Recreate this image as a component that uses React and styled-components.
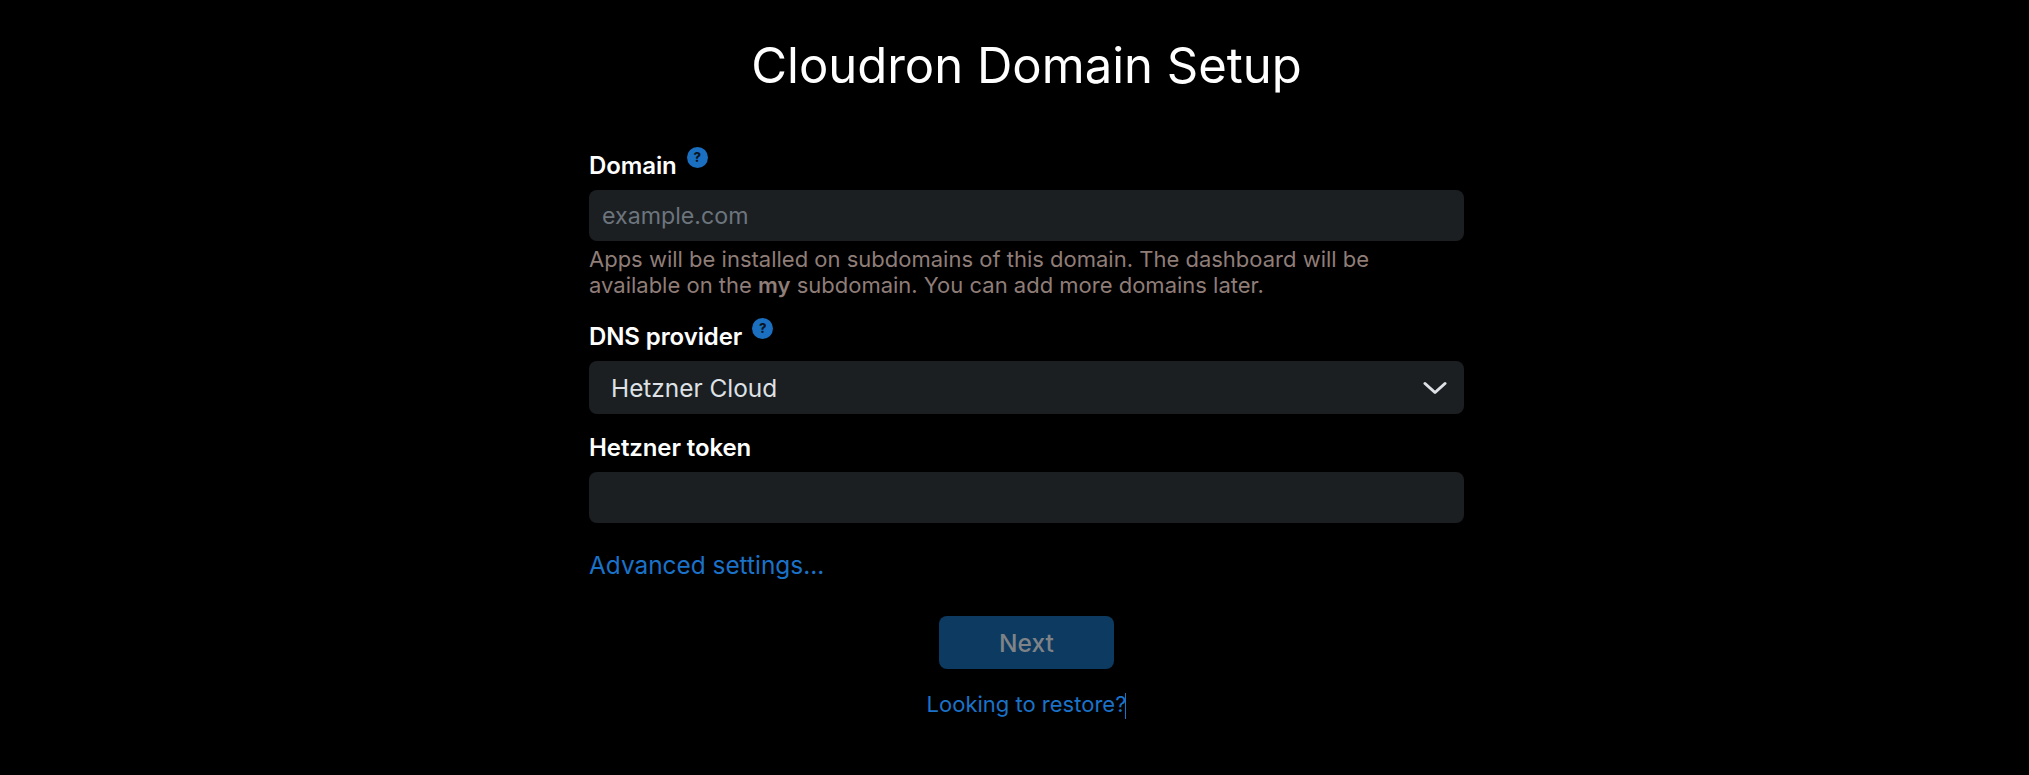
import React from 'react';
import styled, { createGlobalStyle } from 'styled-components';

const Global = createGlobalStyle`
  html, body {
    margin: 0;
    padding: 0;
    background: #000;
  }
  body {
    font-family: Inter, "Liberation Sans", sans-serif;
    color: #fff;
  }
`;

const Page = styled.div`
  min-height: 775px;
  box-sizing: border-box;
  padding: 33px 0 0 24px;
  display: flex;
  flex-direction: column;
  align-items: center;
`;

const Title = styled.h1`
  margin: 0 0 49px;
  font-size: 49px;
  line-height: 66px;
  font-weight: 400;
`;

const Form = styled.form`
  width: 875px;
  display: flex;
  flex-direction: column;
`;

const Label = styled.label`
  display: flex;
  align-items: flex-start;
  height: 42px;
  font-size: 24px;
  line-height: 36px;
  font-weight: 600;
  letter-spacing: -0.1px;
`;

const HelpBadge = styled.span`
  width: 21px;
  height: 21px;
  margin: -1px 0 0 10px;
  border-radius: 50%;
  background: #1a6fc0;
  color: #0b1420;
  font-size: 13px;
  line-height: 21px;
  font-weight: 800;
  text-align: center;
  letter-spacing: 0;
`;

const Input = styled.input`
  box-sizing: border-box;
  width: 100%;
  height: 51px;
  padding: 0 13px;
  border: 0;
  border-radius: 8px;
  background: #1c1f22;
  color: #e8e8e8;
  font: 400 23.2px Inter, sans-serif;

  &::placeholder {
    color: #6c757d;
    opacity: 1;
  }
`;

const Hint = styled.p`
  margin: 5px 0 21px;
  color: #8f7d78;
  font-size: 22px;
  line-height: 26px;
  font-weight: 400;

  b {
    font-weight: 600;
  }
`;

const SelectBox = styled.div`
  box-sizing: border-box;
  width: 100%;
  height: 53px;
  margin-bottom: 16px;
  padding: 0 17px 0 22px;
  display: flex;
  align-items: center;
  justify-content: space-between;
  border-radius: 8px;
  background: #1c1f22;
  color: #dee2e6;
  font-size: 24.4px;
`;

const Chevron = styled.svg`
  width: 24px;
  height: 14px;
  fill: none;
  stroke: #dee2e6;
  stroke-width: 3;
  stroke-linecap: round;
  stroke-linejoin: round;
`;

const TextLink = styled.a`
  color: #1a72c9;
  font-size: ${(p) => p.$size}px;
  line-height: 28px;
`;

const AdvancedRow = styled.div`
  margin: 28px 0 37px;
  height: 28px;
`;

const Actions = styled.div`
  display: flex;
  flex-direction: column;
  align-items: center;
`;

const NextButton = styled.button`
  width: 175px;
  height: 53px;
  border: 0;
  border-radius: 8px;
  background: #0c3a60;
  color: #7f8387;
  font: 500 24.5px Inter, sans-serif;
`;

const RestoreRow = styled.div`
  margin-top: 21px;
  height: 28px;
`;

const Caret = styled.span`
  display: inline-block;
  width: 1px;
  height: 26px;
  margin-left: -1px;
  vertical-align: -7px;
  background: #1a72c9;
`;

function Help() {
  return <HelpBadge>?</HelpBadge>;
}

export default function App() {
  return (
    <>
      <Global />
      <Page>
        <Title>Cloudron Domain Setup</Title>
        <Form>
          <Label>Domain<Help /></Label>
          <Input placeholder="example.com" />
          <Hint>
            Apps will be installed on subdomains of this domain. The dashboard will be
            available on the <b>my</b> subdomain. You can add more domains later.
          </Hint>
          <Label>DNS provider<Help /></Label>
          <SelectBox>
            Hetzner Cloud
            <Chevron viewBox="0 0 24 14">
              <path d="M2 2.5 L12 11.5 L22 2.5" />
            </Chevron>
          </SelectBox>
          <Label>Hetzner token</Label>
          <Input />
          <AdvancedRow>
            <TextLink $size={24.4}>Advanced settings...</TextLink>
          </AdvancedRow>
          <Actions>
            <NextButton type="button">Next</NextButton>
            <RestoreRow>
              <TextLink $size={22}>Looking to restore?</TextLink>
              <Caret />
            </RestoreRow>
          </Actions>
        </Form>
      </Page>
    </>
  );
}
